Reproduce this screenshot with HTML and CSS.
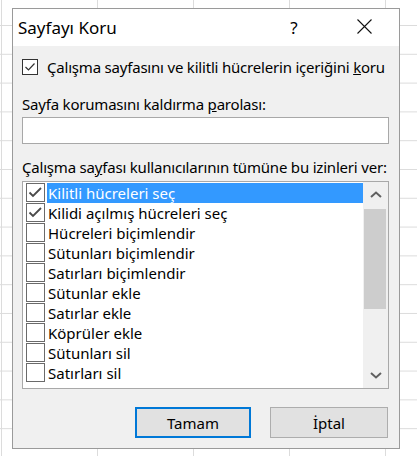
FILE: index.html
```html
<!DOCTYPE html>
<html lang="tr">
<head>
<meta charset="utf-8">
<title>Sayfayı Koru</title>
<link rel="stylesheet" href="styles.css">
</head>
<body>
<div class="dialog">
  <div class="titlebar">
    <span class="title">Sayfayı Koru</span>
    <span class="help">?</span>
    <svg class="close" width="15" height="15" viewBox="0 0 15 15"><path d="M0.5 0.5L14.5 14.5M14.5 0.5L0.5 14.5" stroke="#111" stroke-width="1.1" fill="none"/></svg>
  </div>
  <div class="content">
    <div class="check-row">
      <span class="cb-main"><svg width="14" height="14" viewBox="0 0 14 14"><path d="M2.5 7L5.5 10L11.5 3.5" stroke="#333" stroke-width="1.2" fill="none"/></svg></span>
      <span class="check-text">Çalışma sayfasını ve kilitli hücrelerin içeriğini <u>k</u>oru</span>
    </div>
    <div class="label label-pass">Sayfa korumasını kaldırma <u>p</u>arolası:</div>
    <div class="input"></div>
    <div class="label label-perm">Çalışma sa<u>y</u>fası kullanıcılarının tümüne bu izinleri ver:</div>
    <div class="listbox">
      <div class="items">
        <div class="item selected"><span class="cb checked"><svg width="17" height="17" viewBox="0 0 17 17"><path d="M2.5 8.5L6 12L14 4" stroke="#4a4a4a" stroke-width="1.8" fill="none"/></svg></span><span class="item-text">Kilitli hücreleri seç</span></div>
        <div class="item"><span class="cb checked"><svg width="17" height="17" viewBox="0 0 17 17"><path d="M2.5 8.5L6 12L14 4" stroke="#4a4a4a" stroke-width="1.8" fill="none"/></svg></span><span class="item-text">Kilidi açılmış hücreleri seç</span></div>
        <div class="item"><span class="cb"></span><span class="item-text">Hücreleri biçimlendir</span></div>
        <div class="item"><span class="cb"></span><span class="item-text">Sütunları biçimlendir</span></div>
        <div class="item"><span class="cb"></span><span class="item-text">Satırları biçimlendir</span></div>
        <div class="item"><span class="cb"></span><span class="item-text">Sütunlar ekle</span></div>
        <div class="item"><span class="cb"></span><span class="item-text">Satırlar ekle</span></div>
        <div class="item"><span class="cb"></span><span class="item-text">Köprüler ekle</span></div>
        <div class="item"><span class="cb"></span><span class="item-text">Sütunları sil</span></div>
        <div class="item"><span class="cb"></span><span class="item-text">Satırları sil</span></div>
      </div>
      <div class="scrollbar">
        <div class="arrow"><svg width="12" height="7" viewBox="0 0 12 7"><path d="M1 6L6 1.5L11 6" stroke="#606060" stroke-width="2" fill="none"/></svg></div>
        <div class="thumb"></div>
        <div class="track"></div>
        <div class="arrow"><svg width="12" height="7" viewBox="0 0 12 7"><path d="M1 1L6 5.5L11 1" stroke="#606060" stroke-width="2" fill="none"/></svg></div>
      </div>
    </div>
    <div class="buttons">
      <button class="btn btn-default">Tamam</button>
      <button class="btn btn-cancel">İptal</button>
    </div>
  </div>
</div>
</body>
</html>
```

FILE: styles.css
```css
html, body {
  margin: 0;
  padding: 0;
}
body {
  width: 417px;
  height: 456px;
  overflow: hidden;
  background-color: #ffffff;
  background-image:
    linear-gradient(to right, #dcdcdc 1px, transparent 1px),
    linear-gradient(to bottom, #dcdcdc 1px, transparent 1px);
  background-size: 96px 28.8px;
  background-position: 1px 25px;
  font-family: "Noto Sans", "Open Sans", sans-serif;
  font-size: 15px;
  color: #000;
  padding-top: 8px;
  box-sizing: border-box;
}
.dialog {
  margin-left: 12px;
  width: 388px;
  height: 441px;
  box-sizing: border-box;
  border: 1px solid #9a9a9a;
  background: #f0f0f0;
  display: flex;
  flex-direction: column;
}
.titlebar {
  height: 37px;
  background: #ffffff;
  display: flex;
  align-items: center;
  padding-left: 5px;
  padding-right: 27px;
}
.title {
  flex: 1;
  font-size: 17px;
  line-height: 20px;
  margin-top: 1px;
}
.help {
  width: 20px;
  text-align: center;
  font-size: 17px;
  line-height: 20px;
  margin-top: 1px;
}
.close {
  margin-left: 53px;
  margin-top: -2px;
  display: block;
}
.content {
  flex: 1;
  padding: 13px 10px 0 9px;
  display: flex;
  flex-direction: column;
}
.check-row {
  display: flex;
  align-items: center;
  height: 16px;
}
.cb-main {
  width: 16px;
  height: 16px;
  box-sizing: border-box;
  border: 1px solid #333;
  background: #fff;
  display: flex;
  align-items: center;
  justify-content: center;
  flex: none;
}
.cb-main svg { display: block; }
.check-text {
  margin-left: 9px;
  line-height: 20px;
  white-space: nowrap;
  letter-spacing: -0.2px;
}
.label {
  line-height: 20px;
  white-space: nowrap;
  letter-spacing: -0.2px;
}
.label-pass { margin-top: 19px; }
.input {
  margin-top: 3px;
  height: 27px;
  box-sizing: border-box;
  border: 1px solid #a8a8a8;
  background: #fff;
}
.label-perm { margin-top: 13px; }
.listbox {
  margin-top: 4px;
  height: 208px;
  box-sizing: border-box;
  border: 1px solid #a8a8a8;
  background: #fff;
  display: flex;
}
.items {
  flex: 1;
  padding-top: 1px;
}
.item {
  height: 20px;
  display: flex;
  align-items: flex-start;
}
.cb {
  margin-left: 3px;
  width: 19px;
  height: 19px;
  box-sizing: border-box;
  border: 1px solid #6a6a6a;
  background: #fff;
  flex: none;
  display: flex;
  align-items: center;
  justify-content: center;
}
.cb svg { display: block; }
.item-text {
  margin-left: 2px;
  flex: 1;
  height: 20px;
  line-height: 20px;
  padding-left: 1px;
  white-space: nowrap;
}
.item.selected .item-text {
  background: #3399ff;
  color: #fff;
}
.scrollbar {
  width: 25px;
  background: #f0f0f0;
  display: flex;
  flex-direction: column;
}
.arrow {
  height: 25px;
  display: flex;
  align-items: center;
  justify-content: center;
  flex: none;
}
.arrow svg { display: block; }
.thumb {
  height: 100px;
  margin: 2px 2px 0 1px;
  background: #cdcdcd;
  flex: none;
}
.track { flex: 1; }
.buttons {
  margin-top: 18px;
  display: flex;
  justify-content: flex-end;
  gap: 19px;
  padding-right: 1px;
}
.btn {
  height: 31px;
  box-sizing: border-box;
  background: #e1e1e1;
  font-family: inherit;
  font-size: 15px;
  color: #000;
  padding: 0;
  margin: 0;
}
.btn-default {
  width: 116px;
  border: 2px solid #0078d7;
}
.btn-cancel {
  width: 118px;
  border: 1px solid #adadad;
}
```
